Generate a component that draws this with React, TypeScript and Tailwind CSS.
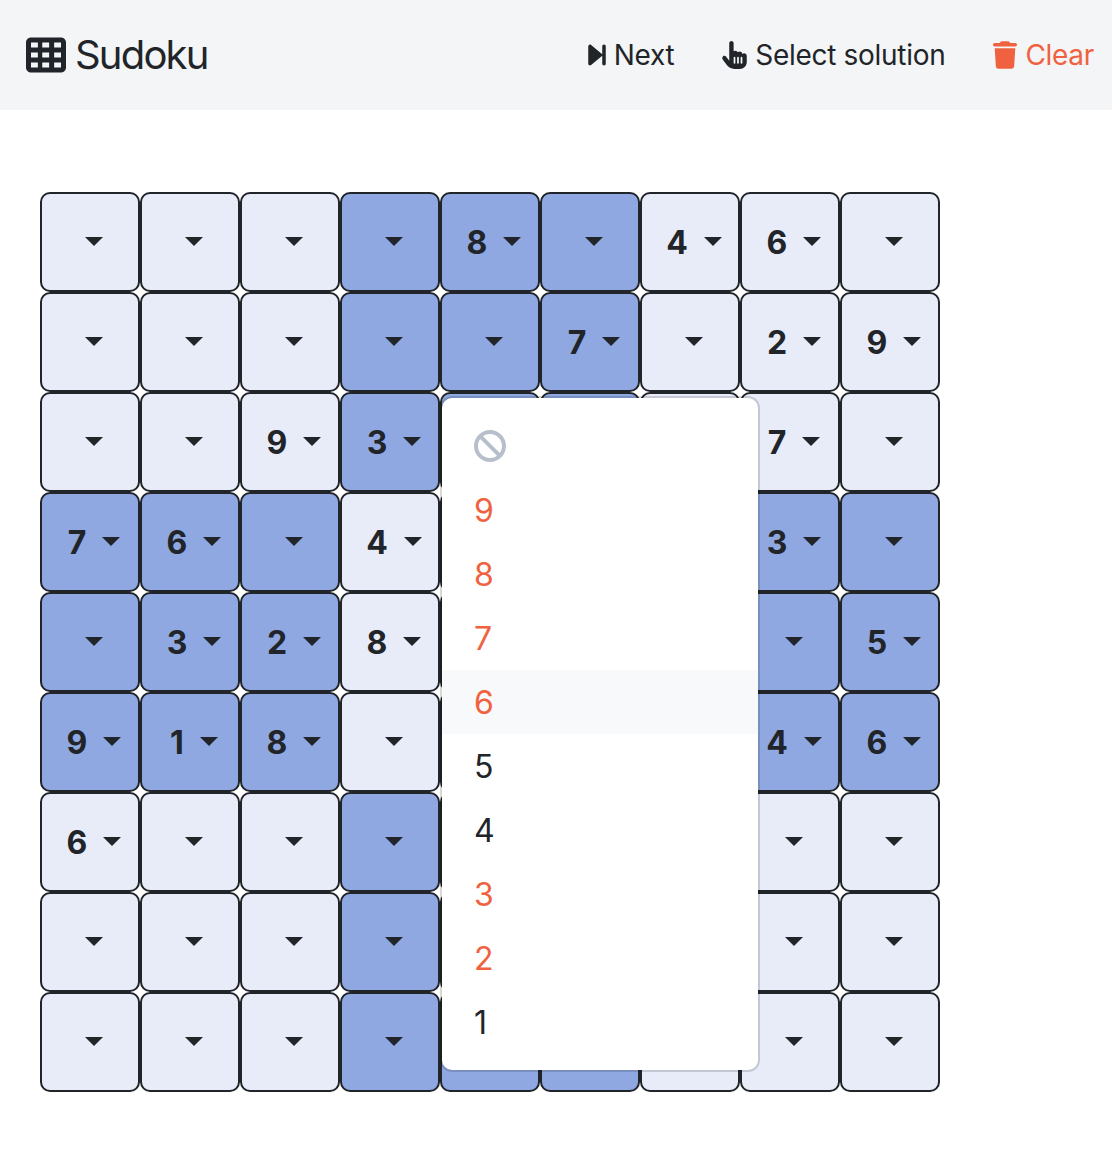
import React from 'react';
import { FaBan, FaHandPointer, FaTrash, FaForwardStep, FaTableCells } from 'react-icons/fa6';

const board = [
  '', '', '', '', '8', '', '4', '6', '',
  '', '', '', '', '', '7', '', '2', '9',
  '', '', '9', '3', '', '', '', '7', '',
  '7', '6', '', '4', '', '', '', '3', '',
  '', '3', '2', '8', '', '', '', '', '5',
  '9', '1', '8', '', '', '', '', '4', '6',
  '6', '', '', '', '', '', '', '', '',
  '', '', '', '', '', '', '', '', '',
  '', '', '', '', '', '', '', '', '',
];

const options = [
  { value: '9', taken: true },
  { value: '8', taken: true },
  { value: '7', taken: true },
  { value: '6', taken: true },
  { value: '5', taken: false },
  { value: '4', taken: false },
  { value: '3', taken: true },
  { value: '2', taken: true },
  { value: '1', taken: false },
];

const isShaded = (index: number) => {
  const row = Math.floor(index / 9);
  const col = index % 9;
  return (Math.floor(row / 3) + Math.floor(col / 3)) % 2 === 1;
};

const Cell: React.FC<{ value: string; shaded: boolean }> = ({ value, shaded }) => (
  <div
    className={`w-[100px] h-[100px] pl-2 flex items-center justify-center rounded-[10px] border-2 border-[#212529] ${
      shaded ? 'bg-[#8fa8e2]' : 'bg-[#e8ecf9]'
    }`}
  >
    {value && <span className="text-[32px] leading-none font-bold mr-4 pt-0.5">{value}</span>}
    <span className="w-0 h-0 mb-0.5 border-x-[9px] border-t-[9px] border-x-transparent border-t-[#212529]" />
  </div>
);

export default function App() {
  return (
    <div className="min-h-[1154px] bg-white text-[#212529] font-['Inter',sans-serif]">
      <nav className="h-[110px] pl-[26px] pr-[18px] flex items-center justify-between bg-[#f4f5f7]">
        <div className="flex items-center gap-[9px] text-[40px] tracking-[-1.8px]">
          <FaTableCells className="w-10 h-10" />
          <span>Sudoku</span>
        </div>
        <div className="flex items-center gap-[48px] text-[28px] tracking-[-0.3px]">
          <div className="flex items-center gap-2">
            <FaForwardStep className="w-[18px] h-7" />
            <span>Next</span>
          </div>
          <div className="flex items-center gap-2">
            <FaHandPointer className="w-[25px] h-7" />
            <span>Select solution</span>
          </div>
          <div className="flex items-center gap-2 text-[#f0623f]">
            <FaTrash className="w-6 h-7" />
            <span>Clear</span>
          </div>
        </div>
      </nav>

      <div className="relative w-[900px] ml-10 mt-[82px] grid grid-cols-9">
        {board.map((value, index) => (
          <Cell key={index} value={value} shaded={isShaded(index)} />
        ))}

        <div className="absolute left-[400px] top-[204px] w-[320px] py-4 bg-white rounded-xl border-2 border-black/15 bg-clip-padding">
          <div className="h-16 px-8 flex items-center">
            <FaBan className="w-8 h-8 text-[#b8bfcc]" />
          </div>
          {options.map((option) => (
            <div
              key={option.value}
              className={`h-16 px-8 pt-0.5 flex items-center text-[32px] ${option.taken ? 'text-[#f0623f]' : ''} ${
                option.value === '6' ? 'bg-[#f8f9fa]' : ''
              }`}
            >
              {option.value}
            </div>
          ))}
        </div>
      </div>
    </div>
  );
}
